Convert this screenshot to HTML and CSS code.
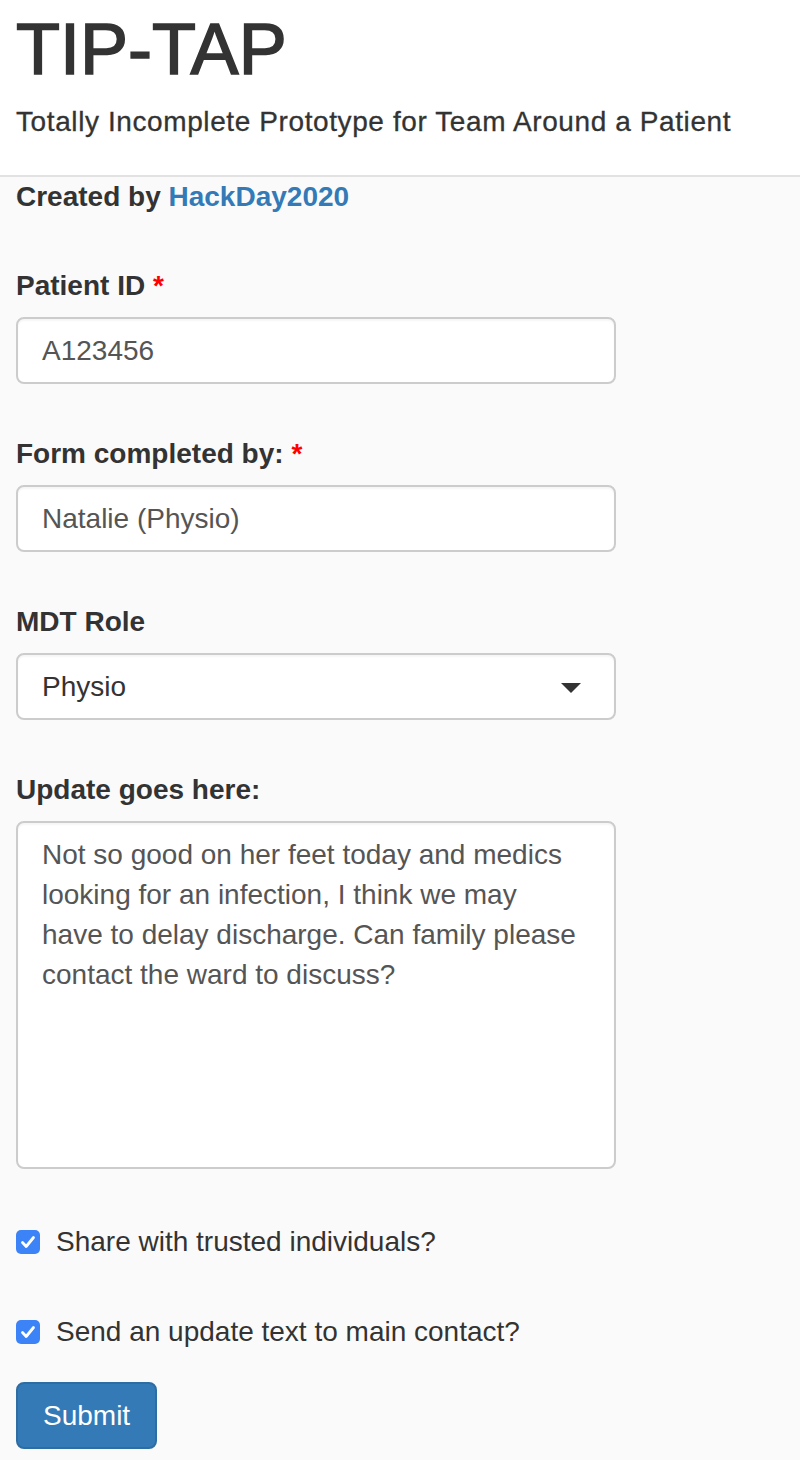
FILE: index.html
```html
<!DOCTYPE html>
<html lang="en">
<head>
<meta charset="utf-8">
<title>TIP-TAP</title>
<link rel="stylesheet" href="styles.css">
</head>
<body>
<header class="header">
  <h1 class="title">TIP-TAP</h1>
  <p class="subtitle">Totally Incomplete Prototype for Team Around a Patient</p>
</header>
<main class="main">
  <p class="credit">Created by <a class="link" href="#">HackDay2020</a></p>
  <form class="form">
    <div class="field">
      <label class="label" for="pid">Patient ID <span class="req">*</span></label>
      <input class="control" id="pid" type="text" value="A123456">
    </div>
    <div class="field">
      <label class="label" for="by">Form completed by: <span class="req">*</span></label>
      <input class="control" id="by" type="text" value="Natalie (Physio)">
    </div>
    <div class="field">
      <label class="label">MDT Role</label>
      <div class="control select">
        <span class="select-value">Physio</span>
        <svg class="caret" width="20" height="10" viewBox="0 0 20 10"><path d="M0 0H20L10 10Z" fill="#333"/></svg>
      </div>
    </div>
    <div class="field field-text">
      <label class="label" for="upd">Update goes here:</label>
      <textarea class="control textarea" id="upd">Not so good on her feet today and medics looking for an infection, I think we may have to delay discharge. Can family please contact the ward to discuss?</textarea>
    </div>
    <label class="check check-first">
      <svg class="box" width="24" height="24" viewBox="0 0 24 24"><rect x="0" y="0" width="24" height="24" rx="5" fill="#3b83f6"/><path d="M6.5 12.5L10.2 16.5L17.5 7.5" fill="none" stroke="#fff" stroke-width="2.8" stroke-linecap="round" stroke-linejoin="round"/></svg>
      <span>Share with trusted individuals?</span>
    </label>
    <label class="check check-second">
      <svg class="box" width="24" height="24" viewBox="0 0 24 24"><rect x="0" y="0" width="24" height="24" rx="5" fill="#3b83f6"/><path d="M6.5 12.5L10.2 16.5L17.5 7.5" fill="none" stroke="#fff" stroke-width="2.8" stroke-linecap="round" stroke-linejoin="round"/></svg>
      <span>Send an update text to main contact?</span>
    </label>
    <div class="actions">
      <button class="btn" type="button">Submit</button>
    </div>
  </form>
</main>
</body>
</html>
```
FILE: styles.css
```css
* { box-sizing: border-box; }
html, body {
  margin: 0;
  padding: 0;
  background: #fafafa;
  color: #333;
  font-family: "Liberation Sans", Arial, Helvetica, sans-serif;
  font-size: 28px;
  line-height: 40px;
}
.header {
  background: #fff;
  height: 177px;
  padding: 9px 16px 0;
  border-bottom: 2px solid #e2e2e2;
}
.title {
  margin: 0;
  font-size: 72px;
  line-height: 80px;
  font-weight: 400;
  color: #333;
  -webkit-text-stroke: 1.6px #333;
}
.subtitle {
  margin: 13px 0 0;
  font-size: 28px;
  line-height: 40px;
  letter-spacing: 0.6px;
  -webkit-text-stroke: 0.3px #333;
}
.main {
  padding: 0 16px;
}
.credit {
  margin: 0;
  font-weight: 700;
  line-height: 40px;
}
.link {
  color: #337ab7;
  text-decoration: none;
}
.form {
  display: flex;
  flex-direction: column;
  padding-top: 49px;
}
.field {
  display: flex;
  flex-direction: column;
  align-items: flex-start;
  margin-bottom: 50px;
}
.field-text {
  margin-bottom: 53px;
}
.label {
  font-weight: 700;
  line-height: 40px;
  margin-bottom: 11px;
}
.req {
  color: #f00;
}
.control {
  width: 600px;
  height: 67px;
  margin: 0;
  padding: 12px 24px;
  border: 2px solid #ccc;
  border-radius: 8px;
  background: #fff;
  color: #555;
  font-family: inherit;
  font-size: 28px;
  line-height: 40px;
  box-shadow: inset 0 2px 2px rgba(0,0,0,0.04);
  outline: none;
}
.select {
  display: flex;
  align-items: center;
  justify-content: space-between;
  color: #333;
  padding-right: 33px;
}
.caret {
  display: block;
  margin-top: 2px;
}
.textarea {
  height: 348px;
  padding-right: 34px;
  resize: none;
  overflow: hidden;
}
.check {
  display: flex;
  align-items: center;
  gap: 16px;
  line-height: 40px;
  color: #333;
}
.check-second {
  margin-top: 50px;
}
.box {
  display: block;
  flex: none;
}
.actions {
  margin-top: 30px;
  display: flex;
}
.btn {
  height: 67px;
  padding: 0 25px;
  background: #337ab7;
  border: 2px solid #2e6da4;
  border-radius: 8px;
  color: #fff;
  font-family: inherit;
  font-size: 28px;
  line-height: 40px;
}
```
